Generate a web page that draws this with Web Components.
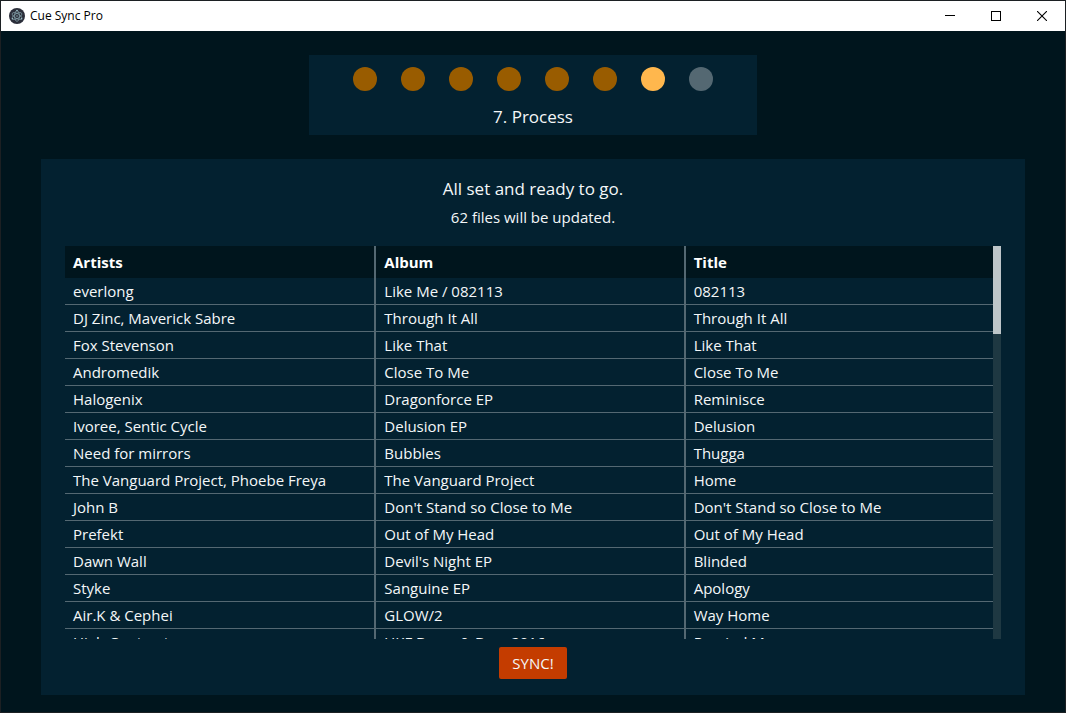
<!DOCTYPE html>
<html lang="en">
<head>
<meta charset="utf-8">
<title>Cue Sync Pro</title>
<style>
  html, body { height: 100%; margin: 0; }
  body {
    --bg: #00151d;
    --panel: #032130;
    --line: #546872;
    --text: #f4f7f8;
    background: var(--bg);
    color: var(--text);
    font-family: "Segoe UI", "Open Sans", "Noto Sans", sans-serif;
    font-size: 15px;
    line-height: 24px;
  }
</style>
</head>
<body>
<app-window>
  <title-bar slot="bar">Cue Sync Pro</title-bar>
  <step-progress steps="8" current="7">7. Process</step-progress>
  <process-panel>
    <span slot="heading">All set and ready to go.</span>
    <span slot="summary">62 files will be updated.</span>
    <track-table slot="content"></track-table>
    <sync-button slot="action">SYNC!</sync-button>
  </process-panel>
</app-window>

<script>
const attach = (el, html) => {
  const t = document.createElement('template');
  t.innerHTML = html;
  el.attachShadow({ mode: 'open' }).append(t.content.cloneNode(true));
};

class AppWindow extends HTMLElement {
  constructor() {
    super();
    attach(this, `
      <style>
        :host { display: flex; flex-direction: column; box-sizing: border-box; height: 100vh; border: 1px solid #1c2023; }
        main { flex: 1; min-height: 0; display: flex; flex-direction: column; align-items: center; gap: 24px; padding: 24px 40px 17px; box-sizing: border-box; }
      </style>
      <slot name="bar"></slot>
      <main><slot></slot></main>`);
  }
}

class TitleBar extends HTMLElement {
  constructor() {
    super();
    attach(this, `
      <style>
        :host { display: flex; align-items: center; height: 30px; background: #fff; color: #000; font-size: 12px; line-height: 16px; }
        .logo { width: 16px; height: 16px; margin: 0 5px 0 8px; }
        .name { flex: 1; }
        button { width: 46px; height: 30px; padding: 0; border: 0; background: none; display: grid; place-items: center; }
        button svg { display: block; }
      </style>
      <svg class="logo" viewBox="0 0 16 16" aria-hidden="true">
        <circle cx="8" cy="8" r="8" fill="#2b2e3a"/>
        <g fill="none" stroke="#9fc4cc" stroke-width=".7" opacity=".8">
          <ellipse cx="8" cy="8" rx="5.4" ry="2.4" transform="rotate(30 8 8)"/>
          <ellipse cx="8" cy="8" rx="5.4" ry="2.4" transform="rotate(90 8 8)"/>
          <ellipse cx="8" cy="8" rx="5.4" ry="2.4" transform="rotate(150 8 8)"/>
        </g>
        <g fill="#9fc4cc">
          <circle cx="8" cy="8" r=".7"/>
          <circle cx="8" cy="2.6" r=".8"/>
          <circle cx="3.4" cy="10.8" r=".8"/>
          <circle cx="12.6" cy="10.8" r=".8"/>
        </g>
      </svg>
      <span class="name"><slot></slot></span>
      <button aria-label="Minimize"><svg width="10" height="10" shape-rendering="crispEdges"><path d="M0 4.5h10" stroke="#000"/></svg></button>
      <button aria-label="Maximize"><svg width="10" height="10" shape-rendering="crispEdges"><path d="M.5.5h9v9h-9z" fill="none" stroke="#000"/></svg></button>
      <button aria-label="Close"><svg width="10" height="10"><path d="M0 0l10 10M10 0L0 10" stroke="#000" stroke-width="1.1"/></svg></button>`);
  }
}

class StepProgress extends HTMLElement {
  constructor() {
    super();
    attach(this, `
      <style>
        :host { display: flex; flex-direction: column; align-items: center; gap: 12px; box-sizing: border-box; width: 100%; max-width: 448px; padding: 12px 0 4px; background: var(--panel); font-size: 17px; line-height: 28px; }
        ol { display: flex; gap: 24px; margin: 0; padding: 0; list-style: none; }
        li { width: 24px; height: 24px; border-radius: 50%; background: #546872; }
        li.done { background: #995c00; }
        li.now { background: #ffb74d; }
      </style>
      <ol></ol>
      <div><slot></slot></div>`);
    const list = this.shadowRoot.querySelector('ol');
    const now = Number(this.getAttribute('current'));
    for (let i = 1; i <= Number(this.getAttribute('steps')); i++) {
      const li = document.createElement('li');
      if (i < now) li.className = 'done';
      if (i === now) { li.className = 'now'; li.setAttribute('aria-current', 'step'); }
      list.append(li);
    }
  }
}

class ProcessPanel extends HTMLElement {
  constructor() {
    super();
    attach(this, `
      <style>
        :host { flex: 1; min-height: 0; width: 100%; display: flex; flex-direction: column; box-sizing: border-box; padding: 16px 24px; background: var(--panel); }
        h1, p { margin: 0; font-weight: 400; line-height: 28px; text-align: center; }
        h1 { font-size: 17px; }
        .content { flex: 1; min-height: 0; display: flex; margin: 15px 0 8px; }
        .action { display: flex; justify-content: center; }
      </style>
      <h1><slot name="heading"></slot></h1>
      <p><slot name="summary"></slot></p>
      <div class="content"><slot name="content"></slot></div>
      <div class="action"><slot name="action"></slot></div>`);
  }
}

const TRACKS = [
  ['everlong', 'Like Me / 082113', '082113'],
  ['DJ Zinc, Maverick Sabre', 'Through It All', 'Through It All'],
  ['Fox Stevenson', 'Like That', 'Like That'],
  ['Andromedik', 'Close To Me', 'Close To Me'],
  ['Halogenix', 'Dragonforce EP', 'Reminisce'],
  ['Ivoree, Sentic Cycle', 'Delusion EP', 'Delusion'],
  ['Need for mirrors', 'Bubbles', 'Thugga'],
  ['The Vanguard Project, Phoebe Freya', 'The Vanguard Project', 'Home'],
  ['John B', "Don't Stand so Close to Me", "Don't Stand so Close to Me"],
  ['Prefekt', 'Out of My Head', 'Out of My Head'],
  ['Dawn Wall', "Devil's Night EP", 'Blinded'],
  ['Styke', 'Sanguine EP', 'Apology'],
  ['Air.K & Cephei', 'GLOW/2', 'Way Home'],
  ['High Contrast', 'UKF Drum & Bass 2016', 'Remind Me'],
];

class TrackTable extends HTMLElement {
  constructor() {
    super();
    attach(this, `
      <style>
        :host { flex: 1; min-width: 0; display: flex; overflow: hidden; }
        .view { flex: 1; min-width: 0; overflow: hidden; }
        table { width: 100%; table-layout: fixed; border-collapse: separate; border-spacing: 0; }
        th, td { box-sizing: border-box; padding: 0 8px; text-align: left; white-space: nowrap; overflow: hidden; text-overflow: ellipsis; }
        th { height: 32px; background: var(--bg); color: #fff; font-weight: 700; }
        td { height: 27px; border-bottom: 1px solid var(--line); }
        th + th, td + td { border-left: 2px solid var(--line); }
        .track { width: 8px; background: #1e3842; }
        .thumb { height: 88px; background: #bec6c9; }
      </style>
      <div class="view"><table>
        <thead><tr><th scope="col">Artists</th><th scope="col">Album</th><th scope="col">Title</th></tr></thead>
        <tbody></tbody>
      </table></div>
      <div class="track"><div class="thumb"></div></div>`);
    const body = this.shadowRoot.querySelector('tbody');
    for (const track of TRACKS) {
      const row = body.insertRow();
      for (const value of track) row.insertCell().textContent = value;
    }
  }
}

class SyncButton extends HTMLElement {
  constructor() {
    super();
    attach(this, `
      <style>
        :host { display: block; }
        button { display: block; width: 68px; height: 32px; padding: 0; border: 0; border-radius: 2px; background: #c43c00; color: var(--text); font: inherit; white-space: nowrap; }
      </style>
      <button type="button"><slot></slot></button>`);
  }
}

customElements.define('app-window', AppWindow);
customElements.define('title-bar', TitleBar);
customElements.define('step-progress', StepProgress);
customElements.define('process-panel', ProcessPanel);
customElements.define('track-table', TrackTable);
customElements.define('sync-button', SyncButton);
</script>
</body>
</html>
